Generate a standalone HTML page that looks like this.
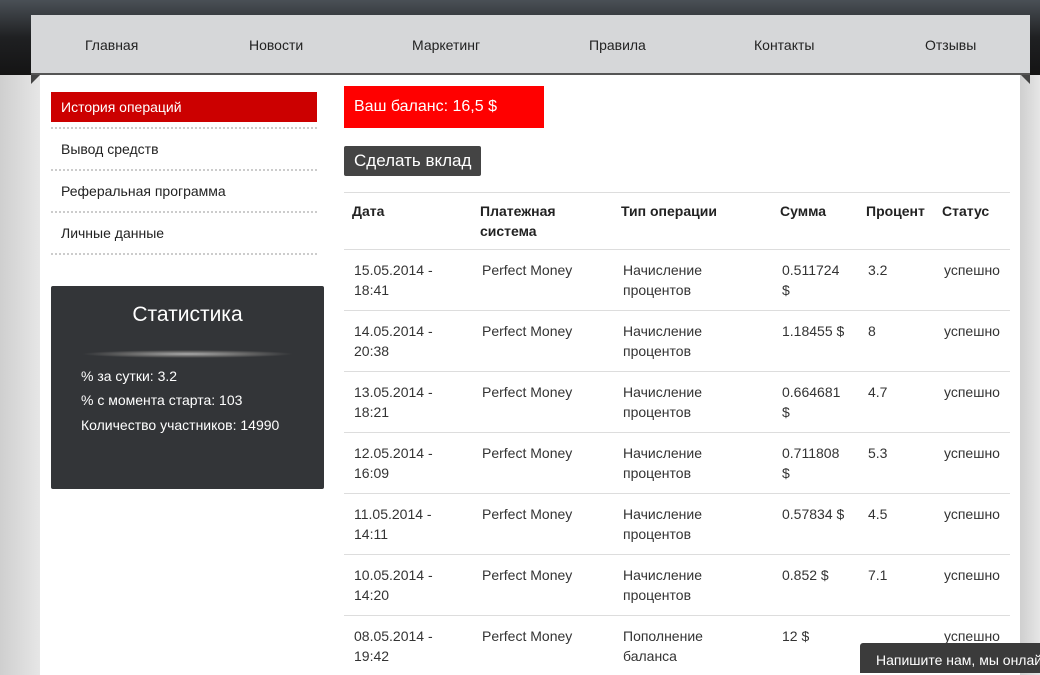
<!DOCTYPE html>
<html><head><meta charset="utf-8"><style>
*{margin:0;padding:0;box-sizing:border-box}
body{width:1040px;height:666px;overflow:hidden;background:#dcdcdc;font-family:"Liberation Sans",sans-serif;position:relative;font-size:14px;color:#333}
.top{position:absolute;left:0;top:0;width:1040px;height:75px;background:linear-gradient(#4a5056,#1f2022 50%,#141414)}
.nav{position:absolute;left:31px;top:15px;width:999px;height:60px;background:#d6d7d9;border-bottom:2px solid #555}
.nav span{position:absolute;top:22px;font-size:14px;color:#222}
.bgr{position:absolute;top:75px;width:40px;height:600px;background:linear-gradient(90deg,#cfcfcf,#e6e6e6)}
.main{position:absolute;left:40px;top:75px;width:980px;height:600px;background:#fff}
.tri{position:absolute;top:75px;width:0;height:0;border-top:9px solid #444}
.menu{position:absolute;left:51px;width:266px;height:30px;line-height:30px;padding-left:10px;font-size:14px;color:#222}
.dot{position:absolute;left:51px;width:266px;border-top:2px dotted #ccc}
.stat{position:absolute;left:51px;top:286px;width:273px;height:203px;background:#333538;border-radius:2px;color:#fff}
.stat h3{position:absolute;top:17px;width:100%;text-align:center;font-weight:normal;font-size:21px}
.stat .gl{position:absolute;left:30px;top:64px;width:213px;height:8px;background:radial-gradient(ellipse at center,#aaa 0%,#666 40%,rgba(51,53,56,0) 70%)}
.stat p{position:absolute;left:30px;font-size:14px}
.bal{position:absolute;left:344px;top:86px;width:200px;height:42px;background:#ff0000;color:#fff;font-size:16px;line-height:42px;padding-left:10px}
.btn{position:absolute;left:344px;top:146px;width:137px;height:30px;background:#444;color:#fff;font-size:17px;line-height:30px;padding-left:10px;border-radius:2px}
.hl{position:absolute;left:344px;width:666px;border-top:1px solid #ddd}
.c{position:absolute;font-size:14px;line-height:20px;color:#333}
.h{font-weight:bold;color:#222}
.chat{position:absolute;left:860px;top:643px;width:190px;height:30px;background:#3b3b3b;color:#fff;font-size:14px;padding:9px 0 0 16px;white-space:nowrap;border-radius:3px 0 0 0}
</style></head><body>
<div class="top"></div>
<div class="bgr" style="left:0"></div><div class="bgr" style="left:1020px;width:20px"></div>
<div class="main"></div>
<div class="tri" style="left:31px;border-right:9px solid transparent"></div>
<div class="tri" style="left:1021px;border-left:9px solid transparent"></div>
<div class="nav">
<span style="left:54px">Главная</span><span style="left:218px">Новости</span><span style="left:381px">Маркетинг</span><span style="left:558px">Правила</span><span style="left:723px">Контакты</span><span style="left:894px">Отзывы</span>
</div>
<div class="menu" style="top:92px;background:#cc0000;color:#fff">История операций</div>
<div class="dot" style="top:127px"></div>
<div class="menu" style="top:134px">Вывод средств</div>
<div class="dot" style="top:169px"></div>
<div class="menu" style="top:176px">Реферальная программа</div>
<div class="dot" style="top:211px"></div>
<div class="menu" style="top:218px">Личные данные</div>
<div class="dot" style="top:253px"></div>
<div class="stat"><h3>Статистика</h3><div class="gl"></div>
<p style="top:82px">% за сутки: 3.2</p><p style="top:106px">% с момента старта: 103</p><p style="top:131px">Количество участников: 14990</p></div>
<div class="bal">Ваш баланс: 16,5 $</div>
<div class="btn">Сделать вклад</div>
<div class="hl" style="top:192px"></div>
<div class="c h" style="left:352px;top:201px">Дата</div>
<div class="c h" style="left:480px;top:201px">Платежная<br>система</div>
<div class="c h" style="left:621px;top:201px">Тип операции</div>
<div class="c h" style="left:780px;top:201px">Сумма</div>
<div class="c h" style="left:866px;top:201px">Процент</div>
<div class="c h" style="left:942px;top:201px">Статус</div>
<div class="hl" style="top:249px"></div>

<div class="c" style="left:354px;top:260px">15.05.2014 -<br>18:41</div><div class="c" style="left:482px;top:260px">Perfect Money</div><div class="c" style="left:623px;top:260px">Начисление<br>процентов</div><div class="c" style="left:782px;top:260px">0.511724<br>$</div><div class="c" style="left:868px;top:260px">3.2</div><div class="c" style="left:944px;top:260px">успешно</div>
<div class="hl" style="top:310px"></div>
<div class="c" style="left:354px;top:321px">14.05.2014 -<br>20:38</div><div class="c" style="left:482px;top:321px">Perfect Money</div><div class="c" style="left:623px;top:321px">Начисление<br>процентов</div><div class="c" style="left:782px;top:321px">1.18455 $</div><div class="c" style="left:868px;top:321px">8</div><div class="c" style="left:944px;top:321px">успешно</div>
<div class="hl" style="top:371px"></div>
<div class="c" style="left:354px;top:382px">13.05.2014 -<br>18:21</div><div class="c" style="left:482px;top:382px">Perfect Money</div><div class="c" style="left:623px;top:382px">Начисление<br>процентов</div><div class="c" style="left:782px;top:382px">0.664681<br>$</div><div class="c" style="left:868px;top:382px">4.7</div><div class="c" style="left:944px;top:382px">успешно</div>
<div class="hl" style="top:432px"></div>
<div class="c" style="left:354px;top:443px">12.05.2014 -<br>16:09</div><div class="c" style="left:482px;top:443px">Perfect Money</div><div class="c" style="left:623px;top:443px">Начисление<br>процентов</div><div class="c" style="left:782px;top:443px">0.711808<br>$</div><div class="c" style="left:868px;top:443px">5.3</div><div class="c" style="left:944px;top:443px">успешно</div>
<div class="hl" style="top:493px"></div>
<div class="c" style="left:354px;top:504px">11.05.2014 -<br>14:11</div><div class="c" style="left:482px;top:504px">Perfect Money</div><div class="c" style="left:623px;top:504px">Начисление<br>процентов</div><div class="c" style="left:782px;top:504px">0.57834 $</div><div class="c" style="left:868px;top:504px">4.5</div><div class="c" style="left:944px;top:504px">успешно</div>
<div class="hl" style="top:554px"></div>
<div class="c" style="left:354px;top:565px">10.05.2014 -<br>14:20</div><div class="c" style="left:482px;top:565px">Perfect Money</div><div class="c" style="left:623px;top:565px">Начисление<br>процентов</div><div class="c" style="left:782px;top:565px">0.852 $</div><div class="c" style="left:868px;top:565px">7.1</div><div class="c" style="left:944px;top:565px">успешно</div>
<div class="hl" style="top:615px"></div>
<div class="c" style="left:354px;top:626px">08.05.2014 -<br>19:42</div><div class="c" style="left:482px;top:626px">Perfect Money</div><div class="c" style="left:623px;top:626px">Пополнение<br>баланса</div><div class="c" style="left:782px;top:626px">12 $</div><div class="c" style="left:944px;top:626px">успешно</div>
<div class="chat">Напишите нам, мы онлайн!</div>
</body></html>
